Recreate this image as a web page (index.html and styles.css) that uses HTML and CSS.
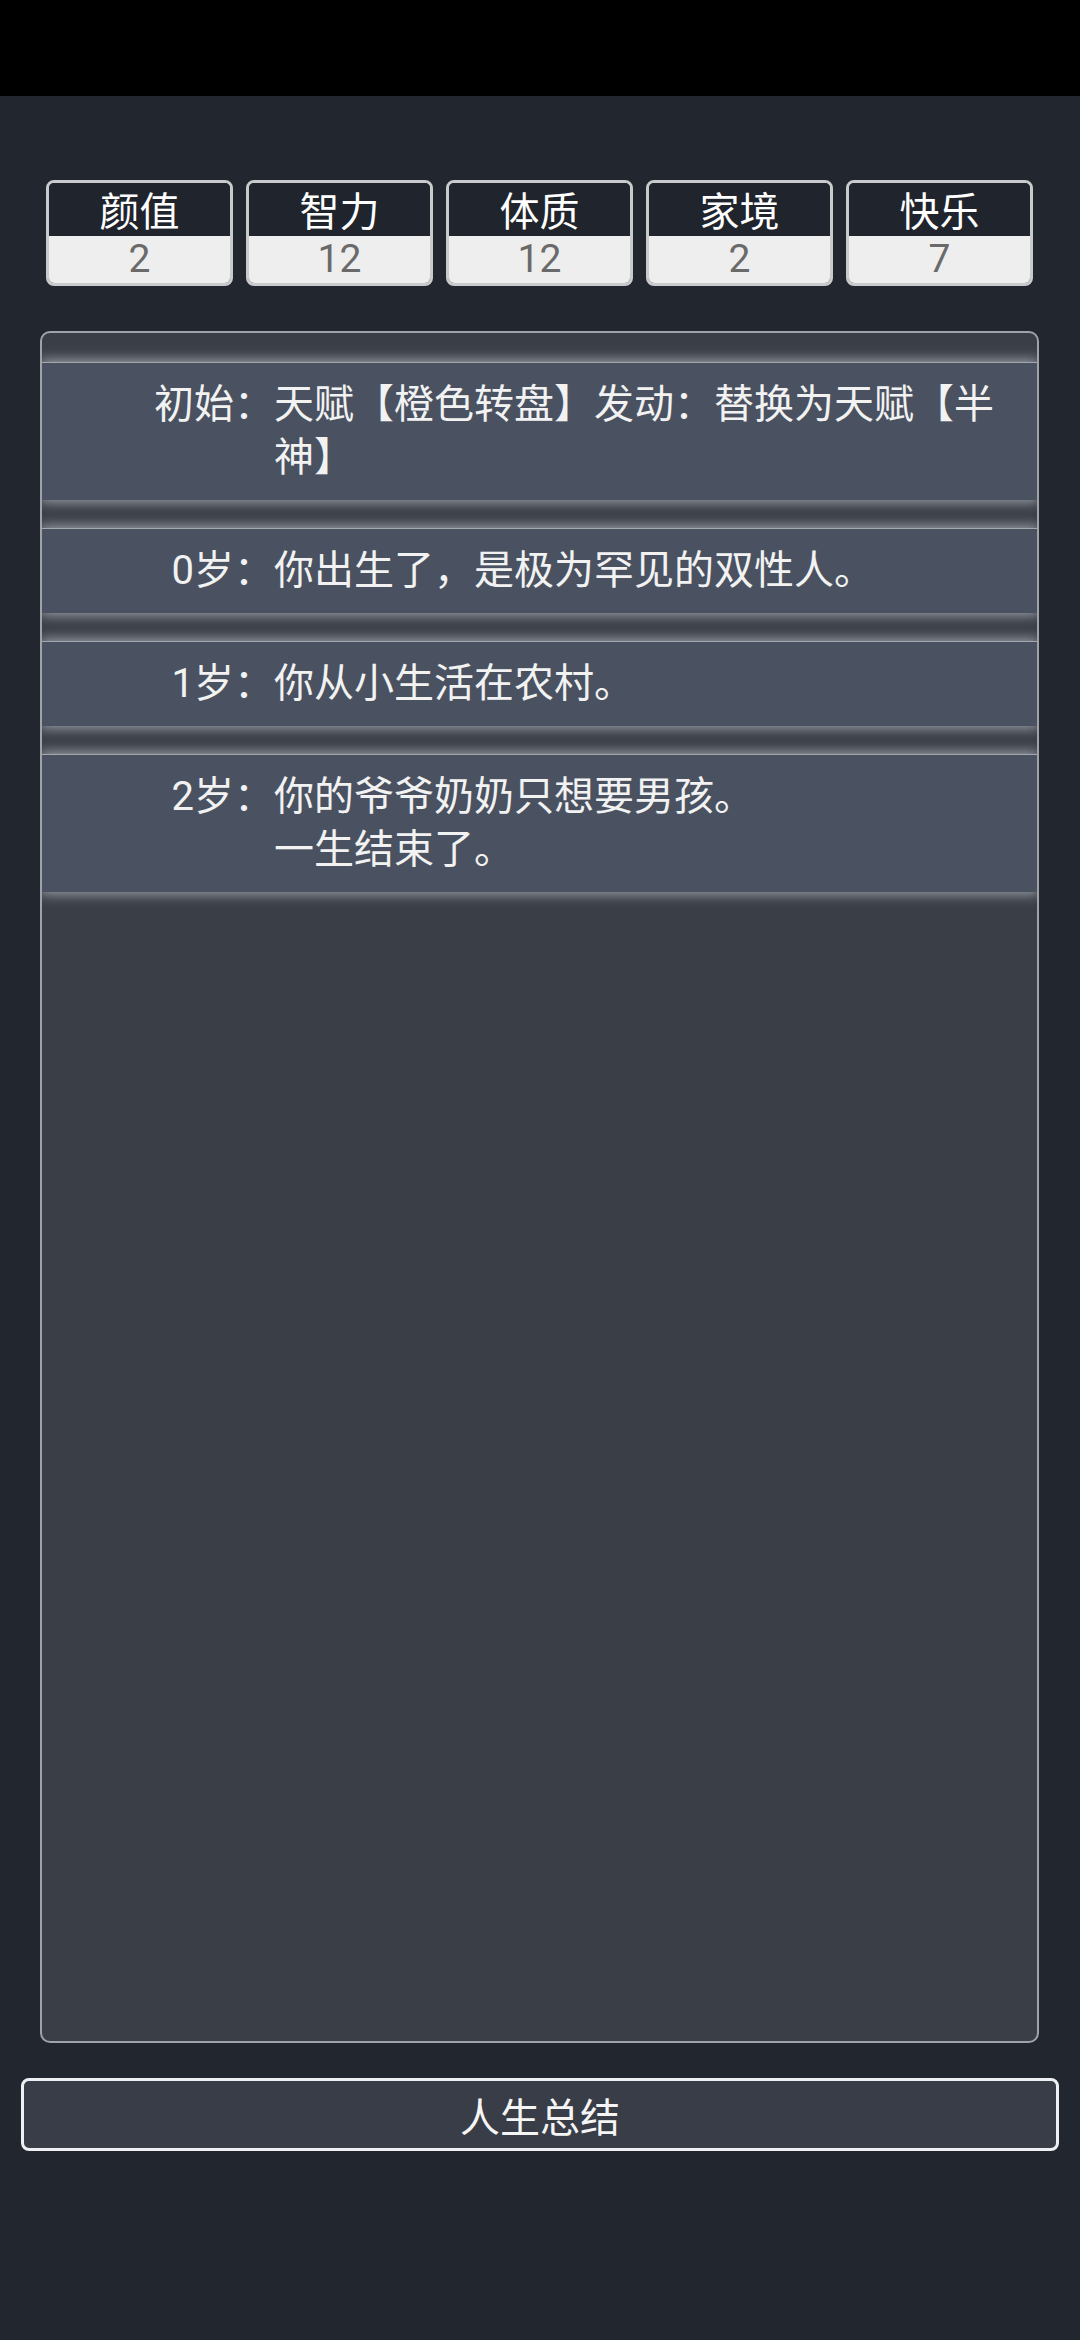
FILE: index.html
```html
<!DOCTYPE html>
<html lang="zh-CN">
  <head>
    <meta charset="UTF-8" />
    <meta name="viewport" content="width=device-width, initial-scale=1.0" />
    <title>人生重开模拟器</title>
    <link rel="stylesheet" href="styles.css">
  </head>
  <body>
    <div class="status-bar"></div>

    <div class="stats">
      <div class="stat">
        <div class="stat-name">颜值</div>
        <div class="stat-value">2</div>
      </div>
      <div class="stat">
        <div class="stat-name">智力</div>
        <div class="stat-value">12</div>
      </div>
      <div class="stat">
        <div class="stat-name">体质</div>
        <div class="stat-value">12</div>
      </div>
      <div class="stat">
        <div class="stat-name">家境</div>
        <div class="stat-value">2</div>
      </div>
      <div class="stat">
        <div class="stat-name">快乐</div>
        <div class="stat-value">7</div>
      </div>
    </div>

    <ul class="trajectory">
      <li class="event">
        <span class="age">初始：</span>
        <span class="text">天赋【橙色转盘】发动：替换为天赋【半神】</span>
      </li>
      <li class="event">
        <span class="age">0岁：</span>
        <span class="text">你出生了，是极为罕见的双性人。</span>
      </li>
      <li class="event">
        <span class="age">1岁：</span>
        <span class="text">你从小生活在农村。</span>
      </li>
      <li class="event">
        <span class="age">2岁：</span>
        <span class="text">你的爷爷奶奶只想要男孩。<br />一生结束了。</span>
      </li>
    </ul>

    <button class="summary-button">人生总结</button>
  </body>
</html>
```

FILE: styles.css
```css
body {
  margin: 0;
  padding: 0;
  background-color: #21262f;
  font-family: Roboto, "Noto Sans CJK SC", sans-serif;
  color: #f2f2f2;
}

.status-bar {
  height: 96px;
  background-color: #000;
}

.stats {
  display: flex;
  gap: 13px;
  margin: 84px 47px 0 46px;
}

.stat {
  flex: 1;
  height: 100px;
  border: 3px solid #c9cacc;
  border-radius: 8px;
  overflow: hidden;
  display: flex;
  flex-direction: column;
}

.stat-name {
  height: 53px;
  line-height: 60px;
  text-align: center;
  font-size: 40px;
  color: #fff;
  background-color: #1f242d;
}

.stat-value {
  flex: 1;
  line-height: 46px;
  text-align: center;
  font-size: 39px;
  color: #6a6a6a;
  background-color: #eeeeee;
}

.trajectory {
  list-style: none;
  margin: 45px 41px 0 40px;
  padding: 30px 0 0 0;
  height: 1678px;
  border: 2px solid #a0a2a7;
  border-radius: 10px;
  background-color: #3a3e47;
  overflow: hidden;
}

.event {
  display: grid;
  grid-template-columns: 232px 1fr;
  padding: 15px 30px 16px 0;
  margin-bottom: 29px;
  font-size: 40px;
  line-height: 53px;
  background-color: #4a5261;
  border-top: 1px solid #a3a7ae;
  margin-top: -1px;
  box-shadow: 0 0 12px 2px rgba(185, 190, 198, 0.8);
}

.age {
  text-align: right;
}

.summary-button {
  display: block;
  box-sizing: border-box;
  width: calc(100% - 42px);
  height: 73px;
  margin: 35px 21px 0 21px;
  border: 3px solid #eef0f3;
  border-radius: 8px;
  background-color: #393d47;
  color: #f5f5f5;
  font-family: Roboto, "Noto Sans CJK SC", sans-serif;
  font-size: 40px;
}
```
